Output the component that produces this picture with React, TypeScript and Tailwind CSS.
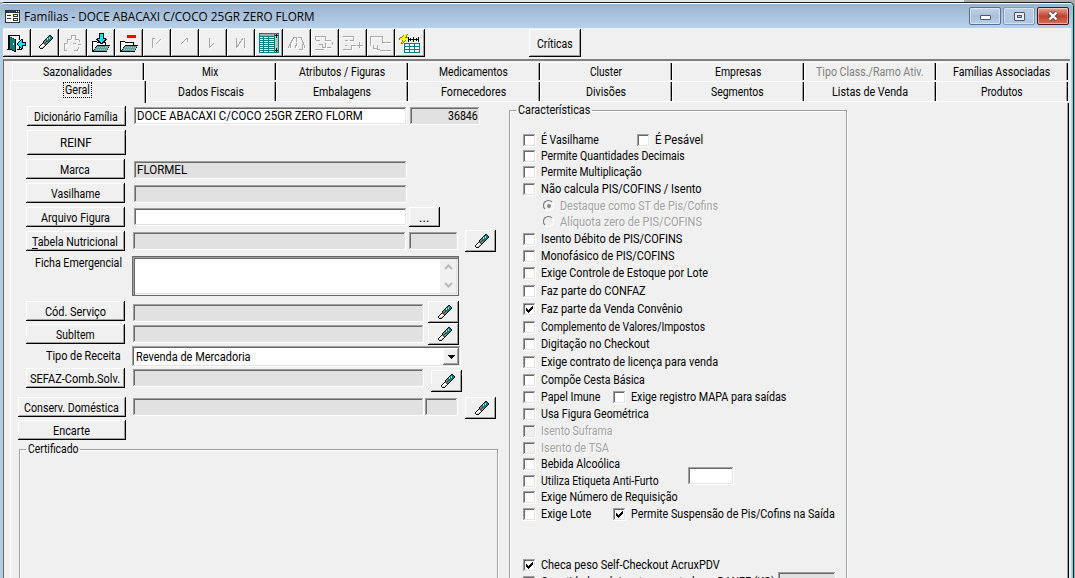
import { useLayoutEffect, useRef, useState, type ReactNode } from "react";

/** Single line of text stretched or squeezed horizontally to a given width. */
function Fit({ w, cls = "", children }: { w: number; cls?: string; children: ReactNode }) {
  const ref = useRef<HTMLSpanElement>(null);
  const [scale, setScale] = useState(1);
  useLayoutEffect(() => {
    if (ref.current) setScale(w / ref.current.offsetWidth);
  }, [w]);
  return (
    <span className={`block shrink-0 whitespace-nowrap ${cls}`} style={{ width: w }}>
      <span ref={ref} className="inline-block origin-left" style={{ transform: `scaleX(${scale})` }}>
        {children}
      </span>
    </span>
  );
}

const RAISED =
  "bg-[#f0f0f0] shadow-[inset_-1px_-1px_0_#000,inset_1px_1px_0_#fff,inset_-2px_-2px_0_#a0a0a0]";
const SUNKEN =
  "shadow-[inset_-1px_-1px_0_#fff,inset_1px_1px_0_#a0a0a0,inset_-2px_-2px_0_#e3e3e3,inset_2px_2px_0_#696969]";

function Btn({ cls, w, children }: { cls: string; w: number; children: ReactNode }) {
  return (
    <button className={`flex shrink-0 items-center justify-center pt-px pr-px ${RAISED} ${cls}`}>
      <Fit w={w}>{children}</Fit>
    </button>
  );
}

function Field({ cls, children }: { cls: string; children?: ReactNode }) {
  return <div className={`flex h-[18px] shrink-0 items-center ${SUNKEN} ${cls}`}>{children}</div>;
}

const ERASER = [
  "..........KK..",
  ".........KTTK.",
  "........KTLTTK",
  ".......KLTLTTK",
  "......KTLTTTK.",
  ".....KGTTTTK..",
  "....KGGDTTK...",
  "....KGDGGK....",
  "...KGDGGK.....",
  "..KWWGDK......",
  ".KWWWWK.......",
  "KWWWSK........",
  "KWSSK.........",
  ".KKK..........",
];
const INK: Record<string, string> = {
  K: "#101010",
  T: "#008080",
  L: "#a8e4e4",
  G: "#808080",
  D: "#404040",
  W: "#ffffff",
  S: "#c0c0c0",
};

function EraserIcon() {
  return (
    <svg width="14" height="14" viewBox="0 0 14 14" shapeRendering="crispEdges">
      {ERASER.flatMap((row, y) =>
        [...row].map((c, x) => (c === "." ? null : <rect key={`${x}-${y}`} x={x} y={y} width="1" height="1" fill={INK[c]} />)),
      )}
    </svg>
  );
}

function EraserBtn({ cls }: { cls: string }) {
  return (
    <button className={`flex h-[22px] w-[31px] shrink-0 items-start pt-1 pl-[10px] ${RAISED} ${cls}`}>
      <EraserIcon />
    </button>
  );
}

function Ghost({ d }: { d: string }) {
  return (
    <svg width="24" height="24" viewBox="0 0 24 24" fill="none" shapeRendering="crispEdges">
      <path d={d} stroke="#fff" transform="translate(1 1)" />
      <path d={d} stroke="#a8a8a8" />
    </svg>
  );
}

function ExitIcon() {
  return (
    <svg width="24" height="24" viewBox="0 0 24 24" shapeRendering="crispEdges">
      <path d="M4 3h11v15H4z" fill="#f0f0f0" />
      <path d="M3 3h12v5h-1V4H4v13h1v1H2v-1h1zM14 15h1v2h2v1h-5v-1h2z" fill="#000" />
      <path d="M4 4h1v1h2v1h2v1h2v13H9v-1H7v-1H5v-1H4z" fill="#000" />
      <path d="M5 5h1v1h2v1h2v12H9v-1H7v-1H5z" fill="#008080" />
      <path d="M8 11h1v2H8z" fill="#fff" />
      <path d="M12 11h1v-1h1V9h1V8h1V7h2v3h3v4h-3v3h-2v-1h-1v-1h-1v-1h-1v-1h-1z" fill="#000" />
      <path d="M13 11h1v-1h1V9h1V8h1v3h3v2h-3v3h-1v-1h-1v-1h-1v-1h-1z" fill="#00e8ff" />
    </svg>
  );
}

function FolderIcon({ kind }: { kind: "in" | "minus" }) {
  return (
    <svg width="24" height="24" viewBox="0 0 24 24" shapeRendering="crispEdges">
      <path d="M3 9h5v1h9v5H8v5H3z" fill="#000" />
      <path d="M4 10h4v1h8v3H7v1H6v2H5v1H4z" fill="#fff" />
      <path d="M8 13h13v1h-1v2h-1v2h-1v2H3v-1h2v-2h1v-2h1v-1h1z" fill="#000" />
      <path d="M8 14h12v1h-1v2h-1v2H5v-1h1v-2h1v-1h1z" fill="#5f9f9f" />
      <path d="M8 15.5h11M7 17.5h11" stroke="#8fd0d0" strokeDasharray="1 1" />
      {kind === "in" ? (
        <>
          <path d="M10 1h5v5h2v1h1v1h-1v1h-1v1h-1v1h-1v1h-3v-1h-1v-1H9V9H8V8H7V7h1V6h2z" fill="#000" />
          <path d="M11 2h3v5h2v1h-1v1h-1v1h-1v1h-1v-1h-1V9h-1V8H9V7h2z" fill="#00e8ff" />
        </>
      ) : (
        <>
          <path d="M9 2h11v5H9z" fill="#f0f0f0" />
          <path d="M10 3h9v3h-9z" fill="#f00" />
        </>
      )}
    </svg>
  );
}

function TableIcon() {
  return (
    <svg width="22" height="22" viewBox="0 0 22 22" shapeRendering="crispEdges">
      <path d="M2 1h20v20H2z" fill="#008080" />
      <path d="M3 2h14v2H3z" fill="#aaa" />
      <path d="M3 5.5h14M3 7.5h14M3 9.5h14M3 11.5h14M3 13.5h14M3 15.5h14M3 17.5h14M3 19.5h14" stroke="#e8ffff" />
      <path d="M6.5 5v15M11.5 5v15" stroke="#008080" />
      <path d="M18 2h3v18h-3z" fill="#c0c0c0" />
      <path d="M19 2h1v1h1v1h-1v2h-1V4h-1V3h1zM19 16h1v2h1v1h-1v1h-1v-1h-1v-1h1z" fill="#000" />
    </svg>
  );
}

function FlashGridIcon() {
  return (
    <svg width="24" height="24" viewBox="0 0 24 24" shapeRendering="crispEdges">
      <path d="M8 2h3v1h-1v2h2v1h-1v1h-1v1H9v1H8v1H7v1H6v1H4v-2h1V8H2V6h1V5h2V4h1V3h2z" fill="#808000" />
      <path d="M8 2h2v1H9v2H8v1h3v1h-1v1H8v1H7v1H6v1H5v-1h1V8H3V6h2V5h1V4h1V3h1z" fill="#ff0" />
      <path d="M11 5h1v5h-1zM12 7h4v1h-4zM13 6h1v3h-1zM16 5h1v5h-1zM17 7h4v1h-4zM19 6h1v3h-1zM21 5h1v5h-1z" fill="#000" />
      <path d="M7 11h16v10H7z" fill="#008080" />
      <path d="M8 12h4v2H8zM13 12h4v2h-4zM18 12h4v2h-4zM8 15h4v2H8zM13 15h4v2h-4zM18 15h4v2h-4zM8 18h4v2H8zM13 18h4v2h-4zM18 18h4v2h-4z" fill="#f4ffff" />
    </svg>
  );
}

const TOOLS: ReactNode[] = [
  <ExitIcon />,
  <span className="block pt-[3px] pl-1.5">
    <EraserIcon />
  </span>,
  <Ghost d="M3.5 19V11.5H6M6.5 11V7.5H10M10.5 7V3.5H14M14.5 3V7.5H18M18.5 8V10M20 12.5H17M12 11.5H15M4 18.5H6M13 18.5H16L18 15.5" />,
  <FolderIcon kind="in" />,
  <FolderIcon kind="minus" />,
  <Ghost d="M7.5 6V16M8 6.5H10M11 12L16 7" />,
  <Ghost d="M8 12L14 6M14 6V10" />,
  <Ghost d="M8.5 6V16M9 15L13 11" />,
  <Ghost d="M7.5 6V16M8 15L14 6M15.5 6V16" />,
  <TableIcon />,
  <Ghost d="M3 16L9 5H11V10M13 5H16L20 16M10 16L12 11M17 12V17H14M5 16V12" />,
  <Ghost d="M2.5 8V4.5H12.5V8.5H18M19.5 10V13M18 15.5H14M3 8.5H7M2 17.5H11M6 12.5H9V15M12.5 11V15.5H9" />,
  <Ghost d="M2 4.5H12.5V8.5H9M4 8.5H7M2 17.5H10.5V13.5H15M18.5 10V16M16 13.5H22M4 13.5H6" />,
  <Ghost d="M1.5 14V4.5H13.5V10.5H22M4.5 13V17M8.5 13V17.5H11M5 16.5H8M22 18.5H11" />,
  <FlashGridIcon />,
];

type Tab = { t: string; w: number; off?: boolean };
const TABS1: Tab[] = [
  { t: "Sazonalidades", w: 69 },
  { t: "Mix", w: 16 },
  { t: "Atributos / Figuras", w: 86 },
  { t: "Medicamentos", w: 69 },
  { t: "Cluster", w: 32 },
  { t: "Empresas", w: 46 },
  { t: "Tipo Class./Ramo Ativ.", w: 108, off: true },
  { t: "Famílias Associadas", w: 97 },
];
const TABS2: Tab[] = [
  { t: "Dados Fiscais", w: 66 },
  { t: "Embalagens", w: 58 },
  { t: "Fornecedores", w: 65 },
  { t: "Divisões", w: 40 },
  { t: "Segmentos", w: 53 },
  { t: "Listas de Venda", w: 76 },
  { t: "Produtos", w: 42 },
];

function TabItem({ tab, cls }: { tab: Tab; cls: string }) {
  return (
    <div
      className={`flex shrink-0 items-center justify-center rounded-tl-[2px] border-t border-l border-white pr-[2px] shadow-[inset_-1px_0_0_#000,inset_-2px_0_0_#a0a0a0] ${cls} ${tab.off ? "text-[#808080]" : ""}`}
    >
      <Fit w={tab.w}>{tab.t}</Fit>
    </div>
  );
}

function Box({ on, off }: { on?: boolean; off?: boolean }) {
  return (
    <span className={`flex size-[13px] shrink-0 items-center justify-center ${SUNKEN} ${off ? "bg-[#f0f0f0]" : "bg-white"}`}>
      {on && (
        <svg width="7" height="7" viewBox="0 0 7 7" shapeRendering="crispEdges">
          <path d="M0 2h1v1h1v1h1V3h1V2h1V1h1V0h1v3H6v1H5v1H4v1H3v1H2V6H1V5H0z" fill="#000" />
        </svg>
      )}
    </span>
  );
}

type Chk = { t: string; w: number; on?: boolean; off?: boolean };
function Check({ c }: { c: Chk }) {
  return (
    <label className="flex h-[13px] shrink-0 items-center gap-[5px]">
      <Box on={c.on} off={c.off} />
      <Fit w={c.w} cls={`mb-[2px] ${c.off ? "text-[#a0a0a0] [text-shadow:1px_1px_0_#fff]" : ""}`}>
        {c.t}
      </Fit>
    </label>
  );
}

function Radio({ t, w, on }: { t: string; w: number; on?: boolean }) {
  return (
    <label className="flex h-[13px] items-center gap-1.5 pl-5">
      <span className="mb-[2px] flex size-[11px] shrink-0 items-center justify-center rounded-full border-[1.5px] border-t-[#707070] border-r-white border-b-white border-l-[#707070]">
        {on && <span className="size-1 rounded-full bg-[#888]" />}
      </span>
      <Fit w={w} cls="mb-[2px] text-[#a0a0a0] [text-shadow:1px_1px_0_#fff]">
        {t}
      </Fit>
    </label>
  );
}

function WinBtn({ cls, children }: { cls: string; children: ReactNode }) {
  return (
    <button className={`flex h-[18px] w-8 items-center justify-center rounded-[2px] border shadow-[inset_0_0_0_1px_rgba(255,255,255,0.45)] ${cls}`}>
      {children}
    </button>
  );
}

export default function App() {
  return (
    <div className="flex h-[578px] w-[1075px] flex-col overflow-hidden bg-[#ababab] font-['Roboto','Liberation_Sans',sans-serif] text-[12px] leading-[14px] text-black select-none">
      <div className="h-[2px] w-[964px] shrink-0 bg-[#dfe7f0]" />
      <div className="flex min-h-0 w-[1074px] flex-1 flex-col rounded-t-[5px] border-t border-r border-[#202020] bg-[#b9d1ea]">
        <header className="flex h-[25px] shrink-0 items-start rounded-t-[4px] border-t border-r border-t-white border-r-[#5fe0f8] bg-linear-to-b from-[#99b4d1] to-[#b9d1ea] pl-[5px]">
          <svg className="mt-[6px]" width="15" height="13" viewBox="0 0 15 13" shapeRendering="crispEdges">
            <path d="M0 0h15v13H0z" fill="#303038" />
            <path d="M1 3h13v9H1z" fill="#fff" />
            <path d="M1 1h9v1H1z" fill="#1c3c9c" />
            <path d="M11 1h1v1h-1zM13 1h1v1h-1z" fill="#fff" />
            <path d="M2 5h4v1H2zM2 8h4v1H2zM8 4h5v3H8zM8 8h5v3H8z" fill="#333" />
            <path d="M9 5h3v1H9zM9 9h3v1H9z" fill="#fff" />
          </svg>
          <div className="mt-[4px] ml-1 flex-1 font-['Open_Sans','Noto_Sans',sans-serif] leading-[17px]">
            <Fit w={291}>Famílias - DOCE ABACAXI C/COCO 25GR ZERO FLORM</Fit>
          </div>
          <div className="mt-[3px] mr-[3px] flex gap-[2px]">
            <WinBtn cls="border-[#5a6f8c] bg-linear-to-b from-[#c3d4e8] via-[#a9c0da] via-50% to-[#b8d0ea]">
              <span className="mt-[3px] h-[5px] w-[11px] rounded-[1px] border border-[#50566a] bg-white" />
            </WinBtn>
            <WinBtn cls="border-[#8199b8] bg-linear-to-b from-[#b9cde4] to-[#aec7e2]">
              <span className="flex h-[9px] w-[11px] items-center justify-center rounded-[1px] border border-[#50566a] bg-[#eee]">
                <span className="h-[3px] w-[5px] border border-[#50566a] bg-[#a9c0da]" />
              </span>
            </WinBtn>
            <WinBtn cls="border-[#4a1418] bg-linear-to-b from-[#e5a493] via-[#c0402a] via-50% to-[#d2705a]">
              <svg width="12" height="10" viewBox="0 0 12 10">
                <path d="M2.5 1.5L9.5 8.5M9.5 1.5L2.5 8.5" stroke="#4a4a60" strokeWidth="4.2" />
                <path d="M2.5 1.5L9.5 8.5M9.5 1.5L2.5 8.5" stroke="#fff" strokeWidth="2.4" />
              </svg>
            </WinBtn>
          </div>
        </header>

        <div className="flex min-h-0 flex-1 flex-col border-r border-l-[3px] border-r-[#5fe0f8] border-l-[#b4cce4] bg-[#f0f0f0] shadow-[inset_-1px_0_0_#b9d1ea]">
          <div className="flex h-[31px] shrink-0 pt-px">
            {TOOLS.map((icon, i) => (
              <button key={i} className={`flex h-7 shrink-0 items-start pt-[3px] pl-[2px] ${i === 14 ? "w-[30px]" : "w-7"} ${RAISED}`}>
                {icon}
              </button>
            ))}
            <Btn cls="ml-[104px] h-7 w-[52px]" w={36}>
              Críticas
            </Btn>
          </div>

          <div className="mr-[2px] flex min-h-0 flex-1 flex-col border-t-2 border-l border-t-[#808080] border-l-[#696969]">
            <div className="flex h-[19px] shrink-0 pt-px pl-2">
              {TABS1.map((t) => (
                <TabItem key={t.t} tab={t} cls="h-[18px] w-[132px]" />
              ))}
            </div>
            <div className="flex h-[23px] shrink-0 items-start">
              <div className="ml-1.5 flex h-[23px] w-[136px] items-start justify-center rounded-tl-[2px] border-t border-l border-white pt-px pr-[2px] shadow-[inset_-1px_0_0_#000,inset_-2px_0_0_#a0a0a0]">
                <span className="border border-dotted border-black px-px pt-px leading-[13px]">
                  <Fit w={25}>Geral</Fit>
                </span>
              </div>
              <div className="mt-px flex h-[21px] border-b border-white">
                {TABS2.map((t, i) => (
                  <TabItem key={t.t} tab={t} cls={i === 0 ? "h-5 w-[130px]" : "h-5 w-[132px]"} />
                ))}
              </div>
            </div>

            <main className="ml-1.5 flex min-h-0 w-[1059px] flex-1 overflow-hidden border-l border-white pl-[7px] shadow-[inset_-1px_0_0_#000,inset_-2px_0_0_#a0a0a0]">
              <section className="flex w-[491px] shrink-0 flex-col pt-[3px]">
                <div className="flex h-6 shrink-0 items-start">
                  <Btn cls="ml-[9px] h-5 w-[99px]" w={84}>Dicionário Família</Btn>
                  <Field cls="mt-px ml-2 w-[273px] bg-white pl-[3px]">
                    <Fit w={226}>DOCE ABACAXI C/COCO 25GR ZERO FLORM</Fit>
                  </Field>
                  <Field cls="mt-px ml-[3px] w-[70px] justify-end bg-[#e1e1e1] pr-[2px]">
                    <Fit w={30}>36846</Fit>
                  </Field>
                </div>
                <div className="flex h-[29px] shrink-0 items-start">
                  <Btn cls="ml-[9px] h-[25px] w-[99px]" w={32}>REINF</Btn>
                </div>
                <div className="flex h-6 shrink-0 items-start">
                  <Btn cls="ml-2 h-5 w-[99px]" w={30}>Marca</Btn>
                  <Field cls="mt-[2px] ml-[9px] w-[273px] bg-[#e1e1e1] pl-[3px]">
                    <Fit w={50}>FLORMEL</Fit>
                  </Field>
                </div>
                <div className="flex h-6 shrink-0 items-start">
                  <Btn cls="ml-2 h-5 w-[99px]" w={49}>Vasilhame</Btn>
                  <Field cls="mt-[2px] ml-[9px] w-[273px] bg-[#e1e1e1]" />
                </div>
                <div className="flex h-[23px] shrink-0 items-start">
                  <Btn cls="ml-2 h-5 w-[99px]" w={69}>Arquivo Figura</Btn>
                  <Field cls="mt-px ml-[9px] w-[273px] bg-white" />
                  <Btn cls="ml-[2px] h-5 w-[31px]" w={11}>...</Btn>
                </div>
                <div className="flex h-[26px] shrink-0 items-start">
                  <Btn cls="mt-px ml-2 h-5 w-[99px]" w={86}>
                    <span className="underline underline-offset-2">T</span>abela Nutricional
                  </Btn>
                  <Field cls="mt-[2px] ml-2 w-[273px] bg-[#e1e1e1]" />
                  <Field cls="mt-[2px] ml-[3px] w-[49px] bg-[#e1e1e1]" />
                  <EraserBtn cls="ml-[7px]" />
                </div>
                <div className="flex h-[45px] shrink-0 items-start">
                  <Fit w={87} cls="ml-[17px]">Ficha Emergencial</Fit>
                  <div className="ml-[10px] flex h-10 w-[327px] justify-end border border-[#696969] bg-white p-[2px] shadow-[inset_1px_1px_0_#a0a0a0,inset_2px_2px_0_#696969,inset_-1px_-1px_0_#f0f0f0,inset_-2px_-2px_0_#e3e3e3]">
                    <div className="flex w-4 flex-col items-center justify-between bg-[#f0f0f0] py-[5px]">
                      <svg width="9" height="6" viewBox="0 0 9 6" fill="none" stroke="#b8b8b8" strokeWidth="2">
                        <path d="M1 5L4.5 1.5L8 5" />
                      </svg>
                      <svg width="9" height="6" viewBox="0 0 9 6" fill="none" stroke="#b8b8b8" strokeWidth="2">
                        <path d="M1 1L4.5 4.5L8 1" />
                      </svg>
                    </div>
                  </div>
                </div>
                <div className="flex h-[22px] shrink-0 items-start">
                  <Btn cls="ml-2 h-5 w-[99px]" w={61}>Cód. Serviço</Btn>
                  <Field cls="mt-[3px] ml-2 w-[291px] bg-[#e1e1e1]" />
                  <EraserBtn cls="ml-1" />
                </div>
                <div className="flex h-[23px] shrink-0 items-start">
                  <Btn cls="mt-px ml-2 h-5 w-[99px]" w={39}>SubItem</Btn>
                  <Field cls="mt-[2px] ml-2 w-[291px] bg-[#e1e1e1]" />
                  <EraserBtn cls="ml-1" />
                </div>
                <div className="flex h-[22px] shrink-0 items-start">
                  <Fit w={75} cls="mt-[3px] ml-7">Tipo de Receita</Fit>
                  <div className={`ml-[11px] flex h-[21px] w-[329px] items-center justify-between bg-white pr-[2px] pl-1 ${SUNKEN}`}>
                    <Fit w={115}>Revenda de Mercadoria</Fit>
                    <span className="flex h-[17px] w-4 items-center justify-center bg-[#f0f0f0] shadow-[inset_-1px_-1px_0_#696969,inset_1px_1px_0_#fff,inset_-2px_-2px_0_#a0a0a0]">
                      <svg width="7" height="4" viewBox="0 0 7 4" shapeRendering="crispEdges">
                        <path d="M0 0h7v1H6v1H5v1H4v1H3V3H2V2H1V1H0z" />
                      </svg>
                    </span>
                  </div>
                </div>
                <div className="flex h-[29px] shrink-0 items-start">
                  <Btn cls="ml-2 h-5 w-[99px]" w={90}>SEFAZ-Comb.Solv.</Btn>
                  <Field cls="mt-px ml-2 w-[291px] bg-[#e1e1e1]" />
                  <EraserBtn cls="mt-[2px] ml-[7px]" />
                </div>
                <div className="flex h-[23px] shrink-0 items-start">
                  <Btn cls="h-5 w-[108px]" w={95}>Conserv. Doméstica</Btn>
                  <Field cls="mt-px ml-[7px] w-[291px] bg-[#e1e1e1]" />
                  <Field cls="mt-px ml-px w-[33px] bg-[#e1e1e1]" />
                  <EraserBtn cls="ml-[7px]" />
                </div>
                <div className="flex h-[22px] shrink-0 items-start">
                  <Btn cls="h-5 w-[108px]" w={37}>Encarte</Btn>
                </div>
                <fieldset className="ml-px h-[200px] w-[479px] shrink-0 border border-[#a0a0a0] pl-[6px] shadow-[inset_1px_1px_0_#fff,1px_1px_0_#fff]">
                  <legend className="px-[2px]">
                    <Fit w={50}>Certificado</Fit>
                  </legend>
                </fieldset>
              </section>

              <fieldset className="h-[520px] w-[338px] shrink-0 border border-[#a0a0a0] pl-[6px] shadow-[inset_1px_1px_0_#fff,1px_1px_0_#fff]">
                <legend className="px-[2px]">
                  <Fit w={72}>Características</Fit>
                </legend>
                <div className="flex flex-col pt-[17px] pl-[7px]">
                  <div className="flex gap-[38px]">
                    <Check c={{ t: "É Vasilhame", w: 58 }} />
                    <Check c={{ t: "É Pesável", w: 48 }} />
                  </div>
                  <div className="mt-[3px] flex flex-col gap-[3px]">
                    <Check c={{ t: "Permite Quantidades Decimais", w: 144 }} />
                    <Check c={{ t: "Permite Multiplicação", w: 101 }} />
                  </div>
                  <div className="mt-1 flex flex-col gap-1">
                    <Check c={{ t: "Não calcula PIS/COFINS / Isento", w: 161 }} />
                    <div className="flex flex-col gap-[3px]">
                      <Radio t="Destaque como ST de Pis/Cofins" w={158} on />
                      <Radio t="Alíquota zero de PIS/COFINS" w={142} />
                    </div>
                    <Check c={{ t: "Isento Débito de PIS/COFINS", w: 141 }} />
                    <Check c={{ t: "Monofásico de PIS/COFINS", w: 133 }} />
                    <Check c={{ t: "Exige Controle de Estoque por Lote", w: 167 }} />
                  </div>
                  <div className="mt-[5px] flex flex-col gap-[5px]">
                    <Check c={{ t: "Faz parte do CONFAZ", w: 105 }} />
                    <Check c={{ t: "Faz parte da Venda Convênio", w: 141, on: true }} />
                    <Check c={{ t: "Complemento de Valores/Impostos", w: 164 }} />
                  </div>
                  <div className="mt-1 flex flex-col gap-[5px]">
                    <Check c={{ t: "Digitação no Checkout", w: 109 }} />
                    <Check c={{ t: "Exige contrato de licença para venda", w: 177 }} />
                    <Check c={{ t: "Compõe Cesta Básica", w: 104 }} />
                  </div>
                  <div className="mt-1 flex flex-col gap-1">
                    <div className="flex gap-[13px]">
                      <Check c={{ t: "Papel Imune", w: 59 }} />
                      <Check c={{ t: "Exige registro MAPA para saídas", w: 155 }} />
                    </div>
                    <Check c={{ t: "Usa Figura Geométrica", w: 108 }} />
                    <Check c={{ t: "Isento Suframa", w: 71, off: true }} />
                    <Check c={{ t: "Isento de TSA", w: 68, off: true }} />
                  </div>
                  <div className="mt-[3px] flex h-[30px] items-start">
                    <div className="flex w-[165px] flex-col gap-1">
                      <Check c={{ t: "Bebida Alcoólica", w: 79 }} />
                      <Check c={{ t: "Utiliza Etiqueta Anti-Furto", w: 118 }} />
                    </div>
                    <Field cls="mt-[9px] w-[46px] bg-white" />
                  </div>
                  <div className="mt-[3px] flex flex-col gap-1">
                    <Check c={{ t: "Exige Número de Requisição", w: 137 }} />
                    <div className="flex gap-[22px]">
                      <Check c={{ t: "Exige Lote", w: 50 }} />
                      <Check c={{ t: "Permite Suspensão de Pis/Cofins na Saída", w: 204, on: true }} />
                    </div>
                  </div>
                  <div className="mt-[38px]">
                    <Check c={{ t: "Checa peso Self-Checkout AcruxPDV", w: 179, on: true }} />
                  </div>
                  <div className="flex items-start">
                    <div className="pt-1">
                      <Check c={{ t: "Quantidade máxima transportada no DANFE (KG)", w: 234 }} />
                    </div>
                    <Field cls="ml-[3px] w-[58px] bg-[#e1e1e1]" />
                  </div>
                </div>
              </fieldset>
            </main>
          </div>
        </div>
      </div>
    </div>
  );
}
